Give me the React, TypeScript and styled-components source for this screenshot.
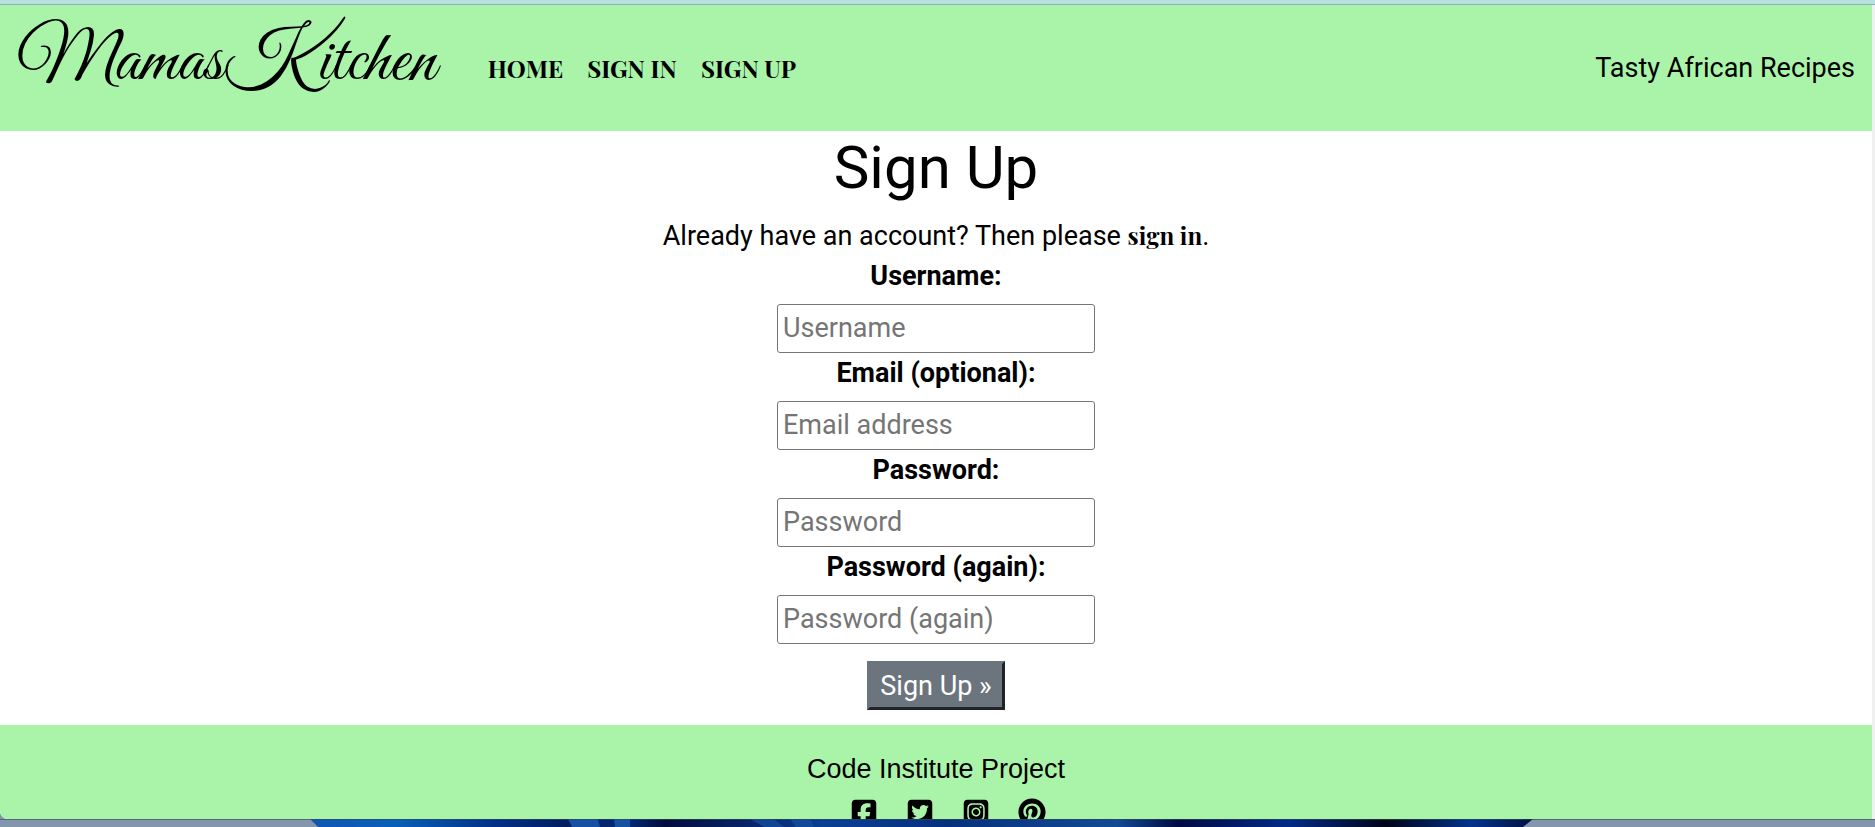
import React from 'react';
import styled, { createGlobalStyle } from 'styled-components';
import {
  FaSquareFacebook,
  FaSquareTwitter,
  FaSquareInstagram,
  FaPinterest,
} from 'react-icons/fa6';

const sans = "Roboto, 'Liberation Sans', sans-serif";
const serif = "'Playfair Display', 'Liberation Serif', serif";

const GlobalStyle = createGlobalStyle`
  *, *::before, *::after { box-sizing: border-box; }
  body {
    margin: 0;
    color: #000;
    font-family: ${sans};
    font-size: 27px;
    line-height: 40px;
  }
`;

const Desktop = styled.div`
  display: flex;
  flex-direction: column;
  height: 100vh;
  overflow: hidden;
  background: #8496ae;
`;

const BrowserEdge = styled.div`
  flex: none;
  height: 5px;
  background: #b8dfe3;
  border-bottom: 1px solid #86b5b4;
`;

const Viewport = styled.div`
  flex: 1;
  min-height: 0;
  display: flex;
  flex-direction: column;
  overflow: hidden;
  background: #fff;
  border-right: 3px solid #f0f0f0;
  border-bottom-left-radius: 8px;
`;

const Header = styled.header`
  flex: none;
  display: flex;
  align-items: flex-start;
  height: 126px;
  padding: 0 17px;
  background: #aaf4aa;
`;

const Logo = styled.a`
  margin-right: 52px;
  color: #000;
  font-family: 'Great Vibes', 'Liberation Serif', cursive;
  font-size: 73px;
  line-height: 116px;
  text-decoration: none;
`;

const Nav = styled.nav`
  display: flex;
  flex: 1;
  gap: 24px;
  padding-top: 51px;
`;

const SerifLink = styled.a`
  color: #000;
  font-family: ${serif};
  font-size: 24px;
  font-weight: 700;
  line-height: 24px;
  text-decoration: none;
`;

const Tagline = styled.p`
  margin: 0;
  padding-top: 43px;
`;

const Main = styled.main`
  flex: none;
  display: flex;
  flex-direction: column;
  align-items: center;
  padding: 1px 0 15px;
`;

const Title = styled.h1`
  margin: 0 0 12px;
  font-size: 60px;
  font-weight: 400;
  line-height: 72px;
`;

const Intro = styled.p`
  margin: 0;
`;

const Form = styled.form`
  display: flex;
  flex-direction: column;
  align-items: center;
`;

const Label = styled.label`
  margin-bottom: 8px;
  font-weight: 700;
`;

const Input = styled.input`
  width: 318px;
  height: 49px;
  padding: 0 5px 2px;
  border: 1px solid #767676;
  border-radius: 3px;
  background: #fff;
  font: inherit;
  &::placeholder { color: #757575; }
`;

const Submit = styled.button`
  height: 49px;
  margin-top: 17px;
  padding: 0 10px;
  border: 3px solid;
  border-color: #6c757d #1f2428 #1f2428 #6c757d;
  background: #6c757d;
  color: #fff;
  font: inherit;
  line-height: 40px;
`;

const Footer = styled.footer`
  flex: 1;
  min-height: 0;
  display: flex;
  flex-direction: column;
  align-items: center;
  padding-top: 24px;
  overflow: hidden;
  background: #aaf4aa;
  font-family: 'Liberation Sans', Arial, sans-serif;
`;

const Credit = styled.p`
  flex: none;
  margin: 0;
`;

const Socials = styled.div`
  display: flex;
  flex: none;
  gap: 28px;
  padding: 9px 0 0 24px;
`;

const SocialLink = styled.a`
  display: flex;
  justify-content: center;
  width: 28px;
  color: #000;
  font-size: 28px;
`;

const Wallpaper = styled.svg`
  flex: none;
  display: block;
  width: 100%;
  height: 8px;
`;

const fields = [
  { id: 'username', label: 'Username:', placeholder: 'Username', type: 'text' },
  { id: 'email', label: 'Email (optional):', placeholder: 'Email address', type: 'email' },
  { id: 'password1', label: 'Password:', placeholder: 'Password', type: 'password' },
  { id: 'password2', label: 'Password (again):', placeholder: 'Password (again)', type: 'password' },
];

const socials = [
  { name: 'Facebook', Icon: FaSquareFacebook },
  { name: 'Twitter', Icon: FaSquareTwitter },
  { name: 'Instagram', Icon: FaSquareInstagram },
  { name: 'Pinterest', Icon: FaPinterest },
];

export default function App() {
  return (
    <Desktop>
      <GlobalStyle />
      <BrowserEdge />
      <Viewport>
        <Header>
          <Logo href="#home">MamasKitchen</Logo>
          <Nav>
            <SerifLink href="#home">HOME</SerifLink>
            <SerifLink href="#signin">SIGN IN</SerifLink>
            <SerifLink href="#signup">SIGN UP</SerifLink>
          </Nav>
          <Tagline>Tasty African Recipes</Tagline>
        </Header>
        <Main>
          <Title>Sign Up</Title>
          <Intro>
            Already have an account? Then please <SerifLink href="#signin">sign in</SerifLink>.
          </Intro>
          <Form onSubmit={(event: React.FormEvent) => event.preventDefault()}>
            {fields.map(({ id, label, placeholder, type }) => (
              <React.Fragment key={id}>
                <Label htmlFor={id}>{label}</Label>
                <Input id={id} type={type} placeholder={placeholder} />
              </React.Fragment>
            ))}
            <Submit type="submit">Sign Up »</Submit>
          </Form>
        </Main>
        <Footer>
          <Credit>Code Institute Project</Credit>
          <Socials>
            {socials.map(({ name, Icon }) => (
              <SocialLink key={name} href={`#${name.toLowerCase()}`} aria-label={name}>
                <Icon />
              </SocialLink>
            ))}
          </Socials>
        </Footer>
      </Viewport>
      <Wallpaper viewBox="0 0 1875 8" preserveAspectRatio="none" aria-hidden="true">
        <defs>
          <linearGradient id="bloom">
            <stop offset="0" stopColor="#1255b4" />
            <stop offset="0.07" stopColor="#0860b8" />
            <stop offset="0.15" stopColor="#02308a" />
            <stop offset="0.21" stopColor="#021d62" />
            <stop offset="0.26" stopColor="#022a7a" />
            <stop offset="0.29" stopColor="#020c3c" />
            <stop offset="0.36" stopColor="#06256c" />
            <stop offset="0.42" stopColor="#0a3f96" />
            <stop offset="0.52" stopColor="#06307c" />
            <stop offset="0.66" stopColor="#124a96" />
            <stop offset="0.71" stopColor="#010a44" />
            <stop offset="0.8" stopColor="#032a8a" />
            <stop offset="0.88" stopColor="#010418" />
            <stop offset="0.95" stopColor="#03338f" />
            <stop offset="1" stopColor="#020f42" />
          </linearGradient>
        </defs>
        <rect width="1875" height="8" fill="#8496ae" />
        <path d="M310 0H1533L1523 8H318Z" fill="url(#bloom)" />
        <path d="M568 0H598L600 8H572ZM614 0H630V8H615Z" fill="#1550a4" />
        <path d="M750 0H774L784 8H764ZM790 0H810L814 8H796Z" fill="#1550a4" opacity="0.7" />
        <path d="M0 0H1875V1H0Z" fill="#37484c" opacity="0.6" />
      </Wallpaper>
    </Desktop>
  );
}
